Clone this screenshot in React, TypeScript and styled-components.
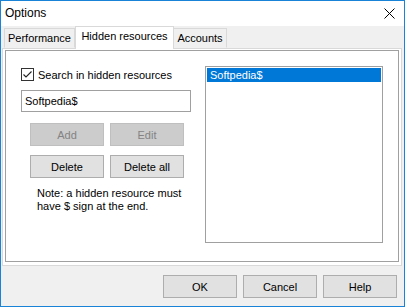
import styled, { createGlobalStyle } from "styled-components";
import * as React from "react";

const GlobalStyle = createGlobalStyle`
  html, body {
    margin: 0;
    padding: 0;
    background: #ffffff;
  }
  * {
    box-sizing: border-box;
  }
`;

const font = `"Liberation Sans", Arial, sans-serif`;

const SWindow = styled("div")`
  width: 405px;
  height: 307px;
  border: 1px solid #1883d7;
  background: #f0f0f0;
  display: flex;
  flex-direction: column;
  font-family: ${font};
  font-size: 11px;
  color: #000;
  overflow: hidden;
`;

const STitleBar = styled("div")`
  height: 25px;
  flex: none;
  background: #ffffff;
  display: flex;
  align-items: center;
  justify-content: space-between;
  padding: 0 9px 1px 4px;
  font-size: 12px;
`;

const STabStrip = styled("div")`
  height: 22px;
  flex: none;
  display: flex;
  align-items: flex-end;
  padding-left: 2px;
`;

const STab = styled("div")<{ $active?: boolean; $w: number }>`
  width: ${p => p.$w}px;
  height: ${p => (p.$active ? 23 : 20)}px;
  margin-bottom: ${p => (p.$active ? -1 : 0)}px;
  margin-left: ${p => (p.$active ? 0 : -1)}px;
  border: 1px solid #d9d9d9;
  border-bottom: ${p => (p.$active ? "none" : "1px solid transparent")};
  background: ${p => (p.$active ? "#ffffff" : "#f0f0f0")};
  display: flex;
  align-items: center;
  justify-content: center;
  padding-bottom: ${p => (p.$active ? 4 : 0)}px;
  position: relative;
  z-index: ${p => (p.$active ? 2 : 1)};

  &:first-child {
    margin-left: 1px;
  }
`;

const SPanel = styled("div")`
  height: 218px;
  flex: none;
  margin: 0 2px 0 1px;
  border: 1px solid #d9d9d9;
  background: #ffffff;
  padding: 1px 2px 3px 2px;
`;

const SPage = styled("div")`
  height: 100%;
  border: 1px solid #a0a0a0;
  display: flex;
  align-items: flex-start;
  padding: 15px 0 0 15px;
`;

const SLeftCol = styled("div")`
  width: 184px;
  flex: none;
  display: flex;
  flex-direction: column;
`;

const SCheckRow = styled("label")`
  height: 17px;
  display: flex;
  align-items: center;
  gap: 4px;
`;

const SCheckBox = styled("span")`
  width: 13px;
  height: 13px;
  border: 1px solid #333333;
  background: #ffffff;
  display: flex;
  align-items: center;
  justify-content: center;
`;

const SInput = styled("div")`
  width: 170px;
  height: 22px;
  margin-top: 7px;
  border: 1px solid #a0a0a0;
  background: #ffffff;
  display: flex;
  align-items: center;
  padding-left: 3px;
`;

const SButtonRow = styled("div")<{ $top: number }>`
  display: flex;
  gap: 6px;
  margin: ${p => p.$top}px 0 0 9px;
`;

const SButton = styled("div")<{ $disabled?: boolean }>`
  width: 74px;
  height: 23px;
  border: 1px solid ${p => (p.$disabled ? "#bfbfbf" : "#adadad")};
  background: ${p => (p.$disabled ? "#cccccc" : "#e1e1e1")};
  color: ${p => (p.$disabled ? "#838383" : "#000000")};
  display: flex;
  align-items: center;
  justify-content: center;
`;

const SNote = styled("div")`
  margin: 9px 0 0 16px;
  line-height: 13px;
`;

const SListBox = styled("div")`
  width: 178px;
  height: 177px;
  border: 1px solid #a0a0a0;
  padding: 1px;
  background: #ffffff;
`;

const SListItem = styled("div")<{ $selected?: boolean }>`
  height: 14px;
  line-height: 14px;
  padding-left: 3px;
  background: ${p => (p.$selected ? "#0078d7" : "transparent")};
  color: ${p => (p.$selected ? "#ffffff" : "#000000")};
`;

const SFooter = styled("div")`
  flex: 1;
  display: flex;
  justify-content: flex-end;
  align-items: flex-start;
  gap: 6px;
  padding: 9px 7px 0 0;
`;

const CloseIcon = () => (
  <svg width="11" height="11" viewBox="0 0 11 11">
    <path d="M0.5 0.5 L10.5 10.5 M10.5 0.5 L0.5 10.5" stroke="#000" strokeWidth="1" />
  </svg>
);

const CheckMark = () => (
  <svg width="11" height="11" viewBox="0 0 11 11">
    <path d="M1.5 5.5 L4 8 L9.5 2.5" stroke="#222" strokeWidth="1.1" fill="none" />
  </svg>
);

const tabs = [
  { label: "Performance", w: 71 },
  { label: "Hidden resources", w: 99, active: true },
  { label: "Accounts", w: 54 },
];

export default function App() {
  return (
    <>
      <GlobalStyle />
      <SWindow>
        <STitleBar>
          <span>Options</span>
          <CloseIcon />
        </STitleBar>
        <STabStrip>
          {tabs.map(t => (
            <STab key={t.label} $w={t.w} $active={t.active}>
              {t.label}
            </STab>
          ))}
        </STabStrip>
        <SPanel>
          <SPage>
            <SLeftCol>
              <SCheckRow>
                <SCheckBox>
                  <CheckMark />
                </SCheckBox>
                Search in hidden resources
              </SCheckRow>
              <SInput>Softpedia$</SInput>
              <SButtonRow $top={11}>
                <SButton $disabled>Add</SButton>
                <SButton $disabled>Edit</SButton>
              </SButtonRow>
              <SButtonRow $top={9}>
                <SButton>Delete</SButton>
                <SButton>Delete all</SButton>
              </SButtonRow>
              <SNote>
                Note: a hidden resource must
                <br />
                have $ sign at the end.
              </SNote>
            </SLeftCol>
            <SListBox>
              <SListItem $selected>Softpedia$</SListItem>
            </SListBox>
          </SPage>
        </SPanel>
        <SFooter>
          <SButton>OK</SButton>
          <SButton>Cancel</SButton>
          <SButton>Help</SButton>
        </SFooter>
      </SWindow>
    </>
  );
}
